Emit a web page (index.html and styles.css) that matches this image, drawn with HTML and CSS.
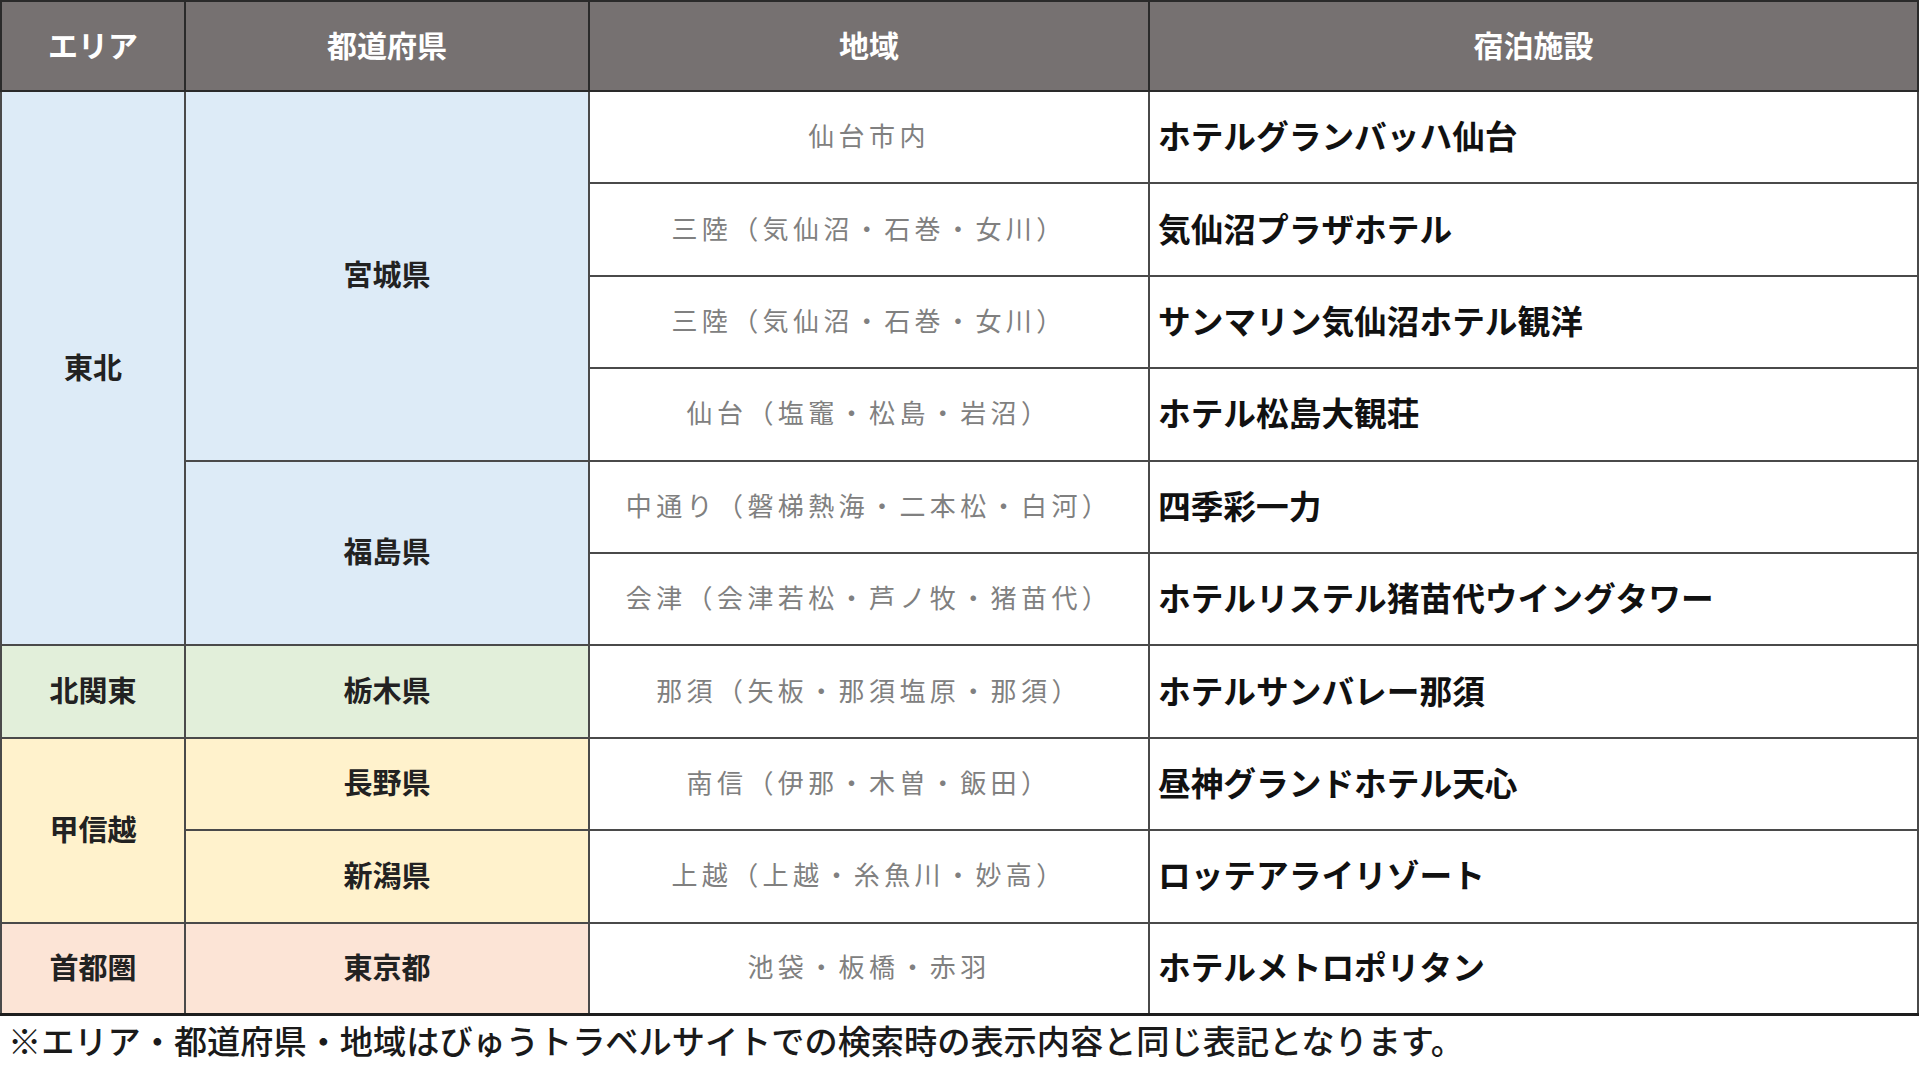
FILE: index.html
```html
<!DOCTYPE html>
<html lang="ja">
<head>
<meta charset="utf-8">
<title>宿泊施設一覧</title>
<link rel="stylesheet" href="styles.css">
</head>
<body>
<table class="list">
  <colgroup>
    <col class="c-area">
    <col class="c-pref">
    <col class="c-region">
    <col class="c-hotel">
  </colgroup>
  <thead>
    <tr class="head">
      <th>エリア</th>
      <th>都道府県</th>
      <th>地域</th>
      <th>宿泊施設</th>
    </tr>
  </thead>
  <tbody>
    <tr>
      <td class="area tohoku" rowspan="6">東北</td>
      <td class="pref tohoku" rowspan="4">宮城県</td>
      <td class="region">仙台市内</td>
      <td class="hotel">ホテルグランバッハ仙台</td>
    </tr>
    <tr>
      <td class="region">三陸（気仙沼・石巻・女川）</td>
      <td class="hotel">気仙沼プラザホテル</td>
    </tr>
    <tr>
      <td class="region">三陸（気仙沼・石巻・女川）</td>
      <td class="hotel">サンマリン気仙沼ホテル観洋</td>
    </tr>
    <tr>
      <td class="region">仙台（塩竈・松島・岩沼）</td>
      <td class="hotel">ホテル松島大観荘</td>
    </tr>
    <tr>
      <td class="pref tohoku" rowspan="2">福島県</td>
      <td class="region">中通り（磐梯熱海・二本松・白河）</td>
      <td class="hotel">四季彩一力</td>
    </tr>
    <tr>
      <td class="region">会津（会津若松・芦ノ牧・猪苗代）</td>
      <td class="hotel">ホテルリステル猪苗代ウイングタワー</td>
    </tr>
    <tr>
      <td class="area kanto">北関東</td>
      <td class="pref kanto">栃木県</td>
      <td class="region">那須（矢板・那須塩原・那須）</td>
      <td class="hotel">ホテルサンバレー那須</td>
    </tr>
    <tr>
      <td class="area koshin" rowspan="2">甲信越</td>
      <td class="pref koshin">長野県</td>
      <td class="region">南信（伊那・木曽・飯田）</td>
      <td class="hotel">昼神グランドホテル天心</td>
    </tr>
    <tr>
      <td class="pref koshin">新潟県</td>
      <td class="region">上越（上越・糸魚川・妙高）</td>
      <td class="hotel">ロッテアライリゾート</td>
    </tr>
    <tr>
      <td class="area shuto">首都圏</td>
      <td class="pref shuto">東京都</td>
      <td class="region">池袋・板橋・赤羽</td>
      <td class="hotel">ホテルメトロポリタン</td>
    </tr>
  </tbody>
</table>
<p class="note">※エリア・都道府県・地域はびゅうトラベルサイトでの検索時の表示内容と同じ表記となります。</p>
</body>
</html>
```

FILE: styles.css
```css
html, body {
  margin: 0;
  padding: 0;
  background: #ffffff;
}

body {
  font-family: "Noto Sans CJK JP", "Noto Sans", sans-serif;
  color: #1a1a1a;
}

.list {
  width: 1917px;
  border-collapse: collapse;
  table-layout: fixed;
  border: 2px solid #1e1e1e;
  border-bottom-width: 3px;
}

.c-area { width: 184px; }
.c-pref { width: 404px; }
.c-region { width: 560px; }
.c-hotel { width: 769px; }

.list th,
.list td {
  border: 2px solid #4a4a4a;
  padding: 0 0 5px 0;
  vertical-align: middle;
}

.head {
  height: 90px;
}

.head th {
  background: #767171;
  color: #ffffff;
  font-size: 30px;
  font-weight: 700;
  text-align: center;
  border-color: #2a2a2a;
}

tbody tr {
  height: 92.4px;
}

.area,
.pref {
  text-align: center;
  font-size: 29px;
  font-weight: 700;
  color: #222222;
}

.tohoku { background: #ddebf7; }
.kanto { background: #e2efda; }
.koshin { background: #fff2cc; }
.shuto { background: #fce4d6; }

.region {
  text-align: center;
  font-size: 26px;
  letter-spacing: 4.4px;
  color: #808080;
  font-weight: 400;
}

.list td.hotel {
  text-align: left;
  padding-left: 8px;
  font-size: 32.7px;
  font-weight: 700;
  color: #111111;
  white-space: nowrap;
}

.note {
  margin: 0;
  padding: 2px 0 0 8px;
  font-size: 33.2px;
  line-height: 44px;
  color: #1a1a1a;
  font-weight: 500;
  white-space: nowrap;
}
```
